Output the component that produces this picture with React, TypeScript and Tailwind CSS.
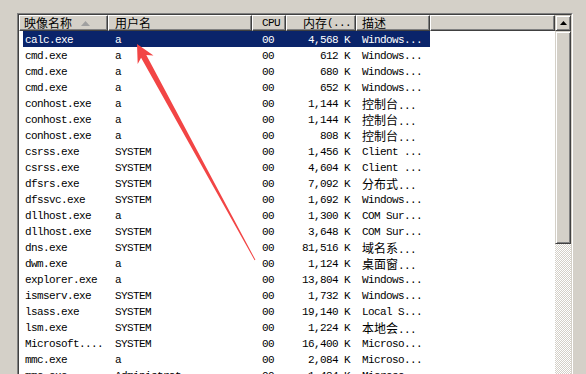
import React from 'react';

type Proc = {
  name: string;
  user: string;
  cpu: string;
  mem: string;
  desc: string;
};

const processes: Proc[] = [
  { name: 'calc.exe', user: 'a', cpu: '00', mem: '4,568 K', desc: 'Windows...' },
  { name: 'cmd.exe', user: 'a', cpu: '00', mem: '612 K', desc: 'Windows...' },
  { name: 'cmd.exe', user: 'a', cpu: '00', mem: '680 K', desc: 'Windows...' },
  { name: 'cmd.exe', user: 'a', cpu: '00', mem: '652 K', desc: 'Windows...' },
  { name: 'conhost.exe', user: 'a', cpu: '00', mem: '1,144 K', desc: '控制台...' },
  { name: 'conhost.exe', user: 'a', cpu: '00', mem: '1,144 K', desc: '控制台...' },
  { name: 'conhost.exe', user: 'a', cpu: '00', mem: '808 K', desc: '控制台...' },
  { name: 'csrss.exe', user: 'SYSTEM', cpu: '00', mem: '1,456 K', desc: 'Client ...' },
  { name: 'csrss.exe', user: 'SYSTEM', cpu: '00', mem: '4,604 K', desc: 'Client ...' },
  { name: 'dfsrs.exe', user: 'SYSTEM', cpu: '00', mem: '7,092 K', desc: '分布式...' },
  { name: 'dfssvc.exe', user: 'SYSTEM', cpu: '00', mem: '1,692 K', desc: 'Windows...' },
  { name: 'dllhost.exe', user: 'a', cpu: '00', mem: '1,300 K', desc: 'COM Sur...' },
  { name: 'dllhost.exe', user: 'SYSTEM', cpu: '00', mem: '3,648 K', desc: 'COM Sur...' },
  { name: 'dns.exe', user: 'SYSTEM', cpu: '00', mem: '81,516 K', desc: '域名系...' },
  { name: 'dwm.exe', user: 'a', cpu: '00', mem: '1,124 K', desc: '桌面窗...' },
  { name: 'explorer.exe', user: 'a', cpu: '00', mem: '13,804 K', desc: 'Windows...' },
  { name: 'ismserv.exe', user: 'SYSTEM', cpu: '00', mem: '1,732 K', desc: 'Windows...' },
  { name: 'lsass.exe', user: 'SYSTEM', cpu: '00', mem: '19,140 K', desc: 'Local S...' },
  { name: 'lsm.exe', user: 'SYSTEM', cpu: '00', mem: '1,224 K', desc: '本地会...' },
  { name: 'Microsoft....', user: 'SYSTEM', cpu: '00', mem: '16,400 K', desc: 'Microso...' },
  { name: 'mmc.exe', user: 'a', cpu: '00', mem: '2,084 K', desc: 'Microso...' },
  { name: 'mmc.exe', user: 'Administrat...', cpu: '00', mem: '1,484 K', desc: 'Microso...' },
];

// wrap CJK runs so they get the wider CJK face
function Txt({ s }: { s: string }) {
  const parts = s.split(/([\u4e00-\u9fff]+)/);
  return (
    <>
      {parts.map((p, i) =>
        /[\u4e00-\u9fff]/.test(p) ? (
          <span key={i} className="font-['Noto_Sans_CJK_SC',sans-serif] text-[12px] tracking-normal">
            {p}
          </span>
        ) : (
          <span key={i}>{p}</span>
        )
      )}
    </>
  );
}

function HeaderCell({ w, children, right }: { w: string; children?: React.ReactNode; right?: boolean }) {
  return (
    <div
      className={`${w} h-[16px] shrink-0 flex items-center bg-[#d4d0c8] border-t border-l border-t-white border-l-white border-r border-b border-r-[#404040] border-b-[#404040] shadow-[inset_-1px_-1px_0_#808080] overflow-hidden whitespace-nowrap ${right ? 'justify-end pr-[4px]' : ''}`}
    >
      {children}
    </div>
  );
}

function Row({ p, selected }: { p: Proc; selected?: boolean }) {
  return (
    <div className="flex h-[16px]">
      <div className="w-[4px] shrink-0" />
      <div className={`flex h-[16px] pt-[1px] ${selected ? 'bg-[#0a246a] text-white' : 'text-black'}`}>
        <div className="w-[85px] pl-[2px] whitespace-nowrap overflow-hidden h-[15px]"><Txt s={p.name} /></div>
        <div className="w-[144px] pl-[7px] whitespace-nowrap overflow-hidden h-[15px]"><Txt s={p.user} /></div>
        <div className="w-[34px] pl-[10px] whitespace-nowrap">{p.cpu}</div>
        <div className="w-[70px] pr-[6px] text-right whitespace-nowrap">{p.mem}</div>
        <div className="w-[74px] pl-[6px] whitespace-nowrap overflow-hidden h-[15px]"><Txt s={p.desc} /></div>
      </div>
    </div>
  );
}

function ScrollBar() {
  return (
    <div className="w-[16px] shrink-0 flex flex-col bg-[repeating-conic-gradient(#d4d0c8_0_25%,#ffffff_0_50%)] bg-[length:2px_2px]">
      {/* up arrow button */}
      <div className="h-[16px] flex items-center justify-center bg-[#d4d0c8] border-t border-l border-t-[#d4d0c8] border-l-[#d4d0c8] border-r border-b border-r-[#404040] border-b-[#404040] shadow-[inset_1px_1px_0_#ffffff,inset_-1px_-1px_0_#808080]">
        <svg width="7" height="4" viewBox="0 0 7 4">
          <path d="M3.5 0 L7 4 L0 4 Z" fill="#000" />
        </svg>
      </div>
      {/* thumb */}
      <div className="h-[213px] bg-[#d4d0c8] border-t border-l border-t-[#d4d0c8] border-l-[#d4d0c8] border-r border-b border-r-[#404040] border-b-[#404040] shadow-[inset_1px_1px_0_#ffffff,inset_-1px_-1px_0_#808080]" />
      <div className="flex-1" />
    </div>
  );
}

export default function App() {
  return (
    <div className="relative w-[586px] h-[374px] overflow-hidden bg-[#d4d0c8] pt-[13px] pl-[17px] font-['Liberation_Mono','Noto_Sans_CJK_SC',monospace] text-[11px] tracking-[-0.6px] leading-[16px]">
      {/* sunken list box */}
      <div className="w-[556px] h-[400px] border-t border-l border-t-[#808080] border-l-[#808080] border-r border-b border-r-white border-b-white">
        <div className="h-full flex border-t border-l border-t-[#404040] border-l-[#404040] border-r border-b border-r-[#d4d0c8] border-b-[#d4d0c8] bg-white">
          <div className="w-[536px] shrink-0 flex flex-col">
            {/* header */}
            <div className="flex text-black">
              <HeaderCell w="w-[89px]">
                <span className="pl-[4px] font-['Noto_Sans_CJK_SC',sans-serif] text-[12px] tracking-normal">映像名称</span>
                <svg className="ml-[9px]" width="9" height="5" viewBox="0 0 9 5">
                  <path d="M4.5 0 L9 5 L0 5 Z" fill="#a0a0a0" />
                </svg>
              </HeaderCell>
              <HeaderCell w="w-[144px]">
                <span className="pl-[6px] font-['Noto_Sans_CJK_SC',sans-serif] text-[12px] tracking-normal">用户名</span>
              </HeaderCell>
              <HeaderCell w="w-[34px]">
                <span className="pl-[9px]">CPU</span>
              </HeaderCell>
              <HeaderCell w="w-[70px]" right>
                <Txt s="内存(..." />
              </HeaderCell>
              <HeaderCell w="w-[74px]">
                <span className="pl-[5px] font-['Noto_Sans_CJK_SC',sans-serif] text-[12px] tracking-normal">描述</span>
              </HeaderCell>
              <HeaderCell w="w-[125px]" />
            </div>
            {/* rows */}
            {processes.map((p, i) => (
              <Row key={i} p={p} selected={i === 0} />
            ))}
          </div>
          <ScrollBar />
        </div>
      </div>

      {/* red annotation arrow */}
      <svg className="absolute left-0 top-0 pointer-events-none" width="586" height="374" viewBox="0 0 586 374">
        <polygon
          points="137,44 153.5,55.5 146.3,54.9 255.4,259.8 254.6,260.2 141.1,57.7 137.7,64.1"
          fill="#f24545"
        />
      </svg>
    </div>
  );
}
